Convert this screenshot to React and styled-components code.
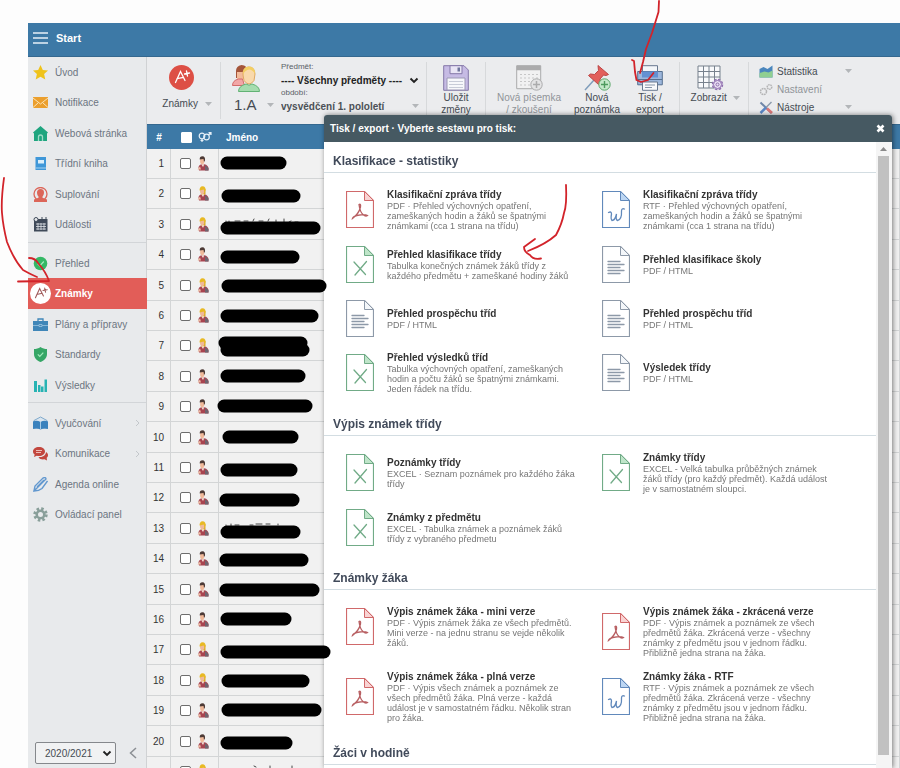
import React from 'react';
import styled, { createGlobalStyle, css } from 'styled-components';

const GlobalStyle = createGlobalStyle`
    * {
        box-sizing: border-box;
    }

    body {
        margin: 0;
        background: #fdfdfd;
        font-family: "Liberation Sans", Arial, sans-serif;
        font-size: 10px;
        color: #454b52;
    }

    button, select, input {
        font: inherit;
        color: inherit;
        margin: 0;
    }
`;

const Page = styled.div`
    height: 100vh;
    padding: 23px 0 0 28px;
    display: flex;
    flex-direction: column;
    overflow: hidden;
`;

const TopBar = styled.header`
    height: 34px;
    flex-shrink: 0;
    padding: 0 5px 4px;
    display: flex;
    align-items: center;
    background: #3d79a6;
    border-bottom: 1px solid #35688f;
`;

const MenuButton = styled.button`
    display: flex;
    align-items: center;
    gap: 8px;
    padding: 0;
    border: none;
    background: none;
    color: white;
    font-size: 11px;
    font-weight: bold;
    cursor: pointer;
`;

const Body = styled.div`
    flex: 1;
    min-height: 0;
    display: flex;
`;

const Sidebar = styled.nav`
    width: 119px;
    flex-shrink: 0;
    display: flex;
    flex-direction: column;
    background: #e8eaec;
    border-right: 1px solid #d0d2d4;
`;

const NavGroup = styled.ul`
    list-style: none;
    margin: 0;
    padding: 0 0 2px;

    & + & {
        border-top: 1px solid #d2d5d8;
        padding-top: 5px;
    }
`;

const NavItem = styled.li`
    height: 30px;

    &:nth-child(even) {
        height: 31px;
    }
`;

const NavLink = styled.a`
    height: 100%;
    padding: 0 6px 0 2px;
    display: flex;
    align-items: center;
    gap: 4px;
    color: #6c7581;
    text-decoration: none;

    ${({ $active }) => $active && css`
        margin-right: -1px;
        background: #e25d58;
        color: white;
        font-weight: bold;
    `}
`;

const NavIcon = styled.span`
    width: 21px;
    display: flex;
    justify-content: center;
`;

const NavArrow = styled.svg`
    margin-left: auto;
`;

const SidebarFooter = styled.div`
    margin-top: auto;
    padding: 0 9px 4px 7px;
    display: flex;
    align-items: center;
    justify-content: space-between;
`;

const CollapseButton = styled.button`
    padding: 0;
    border: none;
    background: none;
    display: flex;
    cursor: pointer;
`;

const SelectBox = styled.span`
    display: grid;
    align-items: center;

    select, svg {
        grid-area: 1 / 1;
    }

    svg {
        justify-self: end;
        margin-right: ${({ $boxed }) => ($boxed ? '4px' : '0')};
        pointer-events: none;
    }
`;

const YearSelect = styled.select`
    width: 81px;
    height: 22px;
    padding: 0 9px;
    appearance: none;
    border: 1px solid #85888c;
    border-radius: 2px;
    background: #f1f2f3;
`;

const Main = styled.main`
    flex: 1;
    min-width: 0;
    background: #f1f1f1;
`;

const Toolbar = styled.div`
    height: 67px;
    padding: 5px 0;
    display: flex;
    background: #ebecee;
`;

const ToolGroup = styled.div`
    width: ${({ $width }) => $width}px;
    flex-shrink: 0;
    display: flex;
    border-right: 1px solid #d7d9db;
`;

const Tool = styled.button`
    width: ${({ $width }) => $width}px;
    padding: 3px 0 0;
    border: none;
    background: none;
    display: flex;
    flex-direction: column;
    align-items: center;
    line-height: 12px;
    cursor: pointer;
    opacity: ${({ disabled }) => (disabled ? 0.55 : 1)};
    gap: ${({ $gap }) => $gap || 1}px;
`;

const ClassTool = styled(Tool)`
    padding-left: 11px;
    align-items: flex-start;
`;

const ToolLabel = styled.span`
    padding-left: ${({ $menu }) => ($menu ? '11px' : '0')};
    display: flex;
    align-items: center;
    gap: 4px;
    text-align: center;
    white-space: pre;
`;

const ClassLabel = styled(ToolLabel)`
    padding-left: 2px;
    gap: 10px;
    font-size: 15px;
`;

const Filters = styled.div`
    flex: 1;
    padding: 0 7px 0 5px;
    display: flex;
    flex-direction: column;
`;

const FilterLabel = styled.label`
    font-size: 8px;
    line-height: 10px;
    color: #5a6066;
`;

const FilterSelect = styled.select`
    width: 100%;
    height: 16px;
    padding: 0;
    appearance: none;
    border: none;
    background: none;
    font-weight: bold;
    color: ${({ $dark }) => ($dark ? '#222' : '#4b5157')};
`;

const ToolList = styled.div`
    padding: 0 0 0 10px;
    width: 103px;
    display: flex;
    flex-direction: column;
`;

const SmallTool = styled.button`
    height: 18px;
    padding: 0;
    border: none;
    background: none;
    display: flex;
    align-items: center;
    gap: 4px;
    opacity: ${({ disabled }) => (disabled ? 0.55 : 1)};

    svg:last-child:not(:first-child) {
        margin-left: auto;
    }
`;

const Table = styled.table`
    width: 100%;
    table-layout: fixed;
    border-collapse: separate;
    border-spacing: 0;
`;

const HeadCell = styled.th`
    width: ${({ $width }) => ($width ? `${$width}px` : 'auto')};
    height: 25px;
    padding: 0 7px;
    background: #3d79a6;
    border-top: 1px solid #35688f;
    color: white;
    font-weight: bold;
    text-align: ${({ $center }) => ($center ? 'center' : 'left')};
`;

const Row = styled.tr`
    height: 30px;

    &:nth-child(5n), &:nth-child(5n + 3) {
        height: 31px;
    }
`;

const Cell = styled.td`
    padding: 0 6px;
    border-right: 1px solid #d3d5d6;
    border-bottom: 1px solid #d3d5d6;
    text-align: right;
    color: #333;
`;

const CheckCell = styled.div`
    padding-left: 3px;
    display: flex;
    align-items: center;
    gap: 6px;
`;

const Check = styled.input`
    width: 11px;
    height: 11px;
    flex-shrink: 0;
    appearance: none;
    border: 1px solid ${({ $light }) => ($light ? 'white' : '#6d6d6d')};
    border-radius: ${({ $light }) => ($light ? '1px' : '2px')};
    background: white;
`;

const Dialog = styled.section`
    position: fixed;
    top: 115px;
    left: 324px;
    right: 8px;
    bottom: 0;
    display: flex;
    flex-direction: column;
    background: white;
    border-radius: 3px 3px 0 0;
    box-shadow: 1px 0 5px rgba(0, 0, 0, 0.5);
`;

const DialogHeader = styled.header`
    height: 27px;
    flex-shrink: 0;
    padding: 0 7px 0 6px;
    display: flex;
    align-items: center;
    justify-content: space-between;
    background: #465962;
    border-radius: 3px 3px 0 0;
    color: white;
`;

const DialogTitle = styled.h1`
    margin: 0;
    font-size: 10px;
`;

const CloseButton = styled.button`
    padding: 0;
    border: none;
    background: none;
    display: flex;
    cursor: pointer;
`;

const DialogBody = styled.div`
    flex: 1;
    min-height: 0;
    display: flex;
    overflow: hidden;
`;

const Reports = styled.div`
    flex: 1;
`;

const SectionTitle = styled.h2`
    margin: 0;
    padding: ${({ $first }) => ($first ? '11px' : '16px')} 9px 3px;
    border-bottom: 1px solid #d3dde2;
    font-size: 12px;
    line-height: 16px;
    color: #414a5a;
`;

const ReportGrid = styled.div`
    padding: 9px 18px 0 22px;
    display: grid;
    grid-template-columns: 1fr 1fr;
    align-items: start;
`;

const Report = styled.a`
    min-height: 54px;
    padding: 6px 0;
    display: flex;
    align-items: center;
    gap: 13px;
    color: #767676;
    text-decoration: none;

    svg {
        flex-shrink: 0;
    }
`;

const ReportText = styled.div`
    max-width: 192px;
    font-size: 9px;
    line-height: 10px;
`;

const ReportTitle = styled.div`
    font-size: 10px;
    line-height: 13px;
    font-weight: bold;
    color: #333;
    white-space: nowrap;
`;

const ScrollTrack = styled.div`
    width: 16px;
    flex-shrink: 0;
    padding: 5px 3px 13px 2px;
    display: flex;
    flex-direction: column;
    align-items: center;
    gap: 5px;
    background: #f5f5f5;
`;

const ScrollThumb = styled.div`
    width: 11px;
    flex: 1;
    background: #c1c1c1;
`;

const Markup = styled.svg`
    position: absolute;
    top: 0;
    left: 0;
    z-index: 3;
    pointer-events: none;
`;

const Caret = () => (
  <svg width="7" height="4" viewBox="0 0 7 4"><path d="M0 0h7L3.500 4z" fill="#b3b6b9" /></svg>
);

const Chevron = () => (
  <svg width="10" height="7" viewBox="0 0 10 7"><path d="M1.500 1.500 5 5l3.500-3.500" fill="none" stroke="#222" strokeWidth="1.900" /></svg>
);

const Grade = ({ size, bg, fg }) => (
  <svg width={size} height={size} viewBox="0 0 25 25">
    <circle cx="12.500" cy="12.500" r="12.500" fill={bg} />
    <path d="M6.500 17.500 11.500 6.500l4.500 9M8 13.700l6.500-1.400M15.500 9l5-1M17.500 6l1 5" fill="none" stroke={fg} strokeWidth="1.300" strokeLinecap="round" />
  </svg>
);

const navIcons = {
  star: <path d="m7.500 0 2.300 5 5.200.5-3.900 3.600 1.200 5.400-4.800-2.800-4.800 2.800 1.200-5.400L0 5.500 5.200 5z" fill="#efc31b" />,
  mail: <><path d="M0 2h15v11H0z" fill="#eb9f2d" /><path d="m0 3 7.500 6L15 3M0 12.500 5 8m10 4.500L10 8" fill="none" stroke="#fbe3b5" /></>,
  home: <><path d="M7.500 0 15 6.500l-1 1V15H1V7.500l-1-1z" fill="#1fa57f" /><path d="M5.500 15v-4q0-2 2-2t2 2v4" fill="none" stroke="#9fdcc7" strokeWidth="1.300" /></>,
  book: <><path d="M2.500 1h10.500v13H2.500z" fill="#3f97d8" /><path d="M5 4h6v3.500H5z" fill="#d9eefb" /><path d="M2.500 12h10.500" stroke="#a5d2f1" /></>,
  user: <><circle cx="7.500" cy="7" r="6.500" fill="none" stroke="#dc6659" strokeWidth="1.300" /><path d="M7.500 2c2.500 0 3.500 1.500 3.500 3.500S10 9 9.500 9.500v1.200L14 12.500V15H1v-2.500l4.500-1.800V9.500C4.500 8.500 4 7 4 5.500S5 2 7.500 2z" fill="#dc6659" /></>,
  calendar: <><path d="M1 2h13.500v12.500H1z" fill="#3f4a59" /><circle cx="3" cy="2.500" r="2" fill="#e8eaec" stroke="#3f4a59" /><path d="M9 0v3.500M13 0v3.500" stroke="#3f4a59" /><path d="M3 7h10M3 9.500h10M3 12h10M5 6v7M8 6v7M11 6v7" stroke="#dfe3e8" strokeWidth=".8" /></>,
  check: <><circle cx="7.500" cy="7.500" r="6.800" fill="#34b865" /><path d="m4.500 7.500 2.300 2.300 4-4.300" fill="none" stroke="#a4ecbd" strokeWidth="1.200" /></>,
  case: <><path d="M0 4h15v10H0z" fill="#3f86b8" /><path d="M5 4V2h5v2" fill="none" stroke="#3f86b8" strokeWidth="1.300" /><path d="M0 8.500h6M9 8.500h6M6 7.500h3v2H6z" stroke="#9cc4de" fill="none" strokeWidth=".8" /></>,
  shield: <><path d="M7.500 0c2 1.600 4.300 2 6.500 2v5c0 4-3 6.800-6.500 8C4 13.800 1 11 1 7V2c2.200 0 4.500-.4 6.500-2z" fill="#35a666" /><path d="m4.800 7.300 2 2 3.500-3.700" fill="none" stroke="#a4ecbd" strokeWidth="1.200" /></>,
  chart: <path d="M1 3h3v11H1zM5 7h2.500v7H5zM8 8.500h2.500V14H8zM11.500 1.500H14V14h-2.500z" fill="#27b3b3" />,
  teach: <><path d="M7.500 1 14 4.500V12H1V4.500z" fill="#dbe6ef" stroke="#7fa9cc" /><path d="M0 5.500q4-1.500 7.500.5 3.500-2 7.500-.5V13q-4-1-7.500.5Q4 12 0 13z" fill="#3b82bd" /><path d="M7.500 6v7" stroke="#a7cbe6" /></>,
  chat: <><path d="M6 1c3.500 0 6 1.900 6 4.500S9.500 10 6 10c-.8 0-1.500-.1-2.200-.3L1 11l.7-2.500C.6 7.800 0 6.700 0 5.500 0 2.900 2.500 1 6 1z" fill="#c2473e" /><path d="M13 6c1.500.8 2 1.900 2 3.200 0 1-.5 1.900-1.300 2.600L14 14.500l-2.500-1.200C9 13.800 6.500 13 5.500 11.200 9.500 11.200 12.800 9.500 13 6z" fill="#c2473e" /><path d="M3 4.500h6M3 6.500h5" stroke="#f3c9c5" strokeWidth=".9" /></>,
  pen: <path d="m1 14 1-5 8-8q3-1 3 1l-8.500 8.500L1 14q5 0 8-2.500L14.500 4M4 10l7-7" fill="none" stroke="#6298cf" strokeWidth="1.400" />,
  gear: <><circle cx="7.500" cy="7.500" r="5.700" fill="none" stroke="#899f9a" strokeWidth="3" strokeDasharray="2.400 2.076" /><circle cx="7.500" cy="7.500" r="3.800" fill="none" stroke="#899f9a" strokeWidth="2.600" /></>,
};

const menu = [
  [['star', 'Úvod'], ['mail', 'Notifikace'], ['home', 'Webová stránka'], ['book', 'Třídní kniha'], ['user', 'Suplování'], ['calendar', 'Události']],
  [['check', 'Přehled'], ['grade', 'Známky'], ['case', 'Plány a přípravy'], ['shield', 'Standardy'], ['chart', 'Výsledky']],
  [['teach', 'Vyučování', true], ['chat', 'Komunikace', true], ['pen', 'Agenda online'], ['gear', 'Ovládací panel']],
];

// m = boy, f = girl
const pupils = 'mffmfffmmmmmfmmmffmmf'.split('');
const numbered = 20;

const Person = ({ type }) => {
  const girl = type === 'f';
  return (
    <svg width="12" height="15" viewBox="0 0 12 15">
      <path d="M1.500 11.500q0-2.500 3-3.300h3q3.500 1 4 3.800v2.500H2z" fill="#a84450" />
      <path d="m8 9 3.500 3v2.500H8z" fill="#6e6570" />
      {girl && <path d="M3 3h5.500v4.500L7.500 9H4.500z" fill="#dcae2a" />}
      <path d="M4.300 8.300 6 11l1.300-2.700z" fill="#f6e6da" />
      <ellipse cx="5.200" cy="5" rx="2.100" ry="3.200" fill="#f0b99a" />
      {girl
        ? <path d="M2.500 4.500Q2.500.5 5.500.3 9 .5 8.500 4.500L7.500 6 6.800 3.500z" fill="#e8b923" />
        : <path d="M2.700 3.500Q2.500.3 5.500.3 8.500.5 8 4.500L7 6 6.500 3z" fill="#4d3a36" />}
      <path d="M.5 13.500 3 10.500l1 3z" fill="#eec0a5" />
    </svg>
  );
};

const fileColors = {
  pdf: ['#d0696a', '#f9d3d3'],
  xls: ['#71ab87', '#bfe5c9'],
  rtf: ['#6189bb', '#bcd6f3'],
  doc: ['#8d99a8', '#f4f7fa'],
};

const fileMarks = {
  pdf: <path d="M13 13.500q2-1 1.500 2.500Q13 22.500 6.500 27.500q.5-2.500 7-3.500 5.500-1 8 .5-2 1.500-4.500-1-3-2.500-4-10z" stroke="#b85f62" />,
  xls: <path d="m8 16 11.500 12.500M20.500 15.500 9 29" />,
  rtf: <path d="M6.500 21.500q3-1.500 3 1.500-1 5 .5 6.500 3 0 4.500-6.500-1 6 1 6.500 4.500-1 4-9.500 0-3 3-2" />,
  doc: <path d="M6 15.500h12M6 18.500h16M6 21.500h12M6 24.500h16M6 27.500h12" />,
};

const FileIcon = ({ type }) => (
  <svg width="28" height="37" viewBox="0 0 28 37" fill="none" stroke={fileColors[type][0]}>
    <path d="M.5.5h18l9 9v27H.5z" strokeWidth="1.200" />
    <path d="M18.500.5v9h9z" fill={fileColors[type][1]} />
    <g strokeWidth="1.300" strokeLinecap="round">{fileMarks[type]}</g>
  </svg>
);

const sections = [
  {
    title: 'Klasifikace - statistiky',
    items: [
      ['pdf', 'Klasifikační zpráva třídy', 'PDF · Přehled výchovných opatření, zameškaných hodin a žáků se špatnými známkami (cca 1 strana na třídu)'],
      ['rtf', 'Klasifikační zpráva třídy', 'RTF · Přehled výchovných opatření, zameškaných hodin a žáků se špatnými známkami (cca 1 strana na třídu)'],
      ['xls', 'Přehled klasifikace třídy', 'Tabulka konečných známek žáků třídy z každého předmětu + zameškané hodiny žáků'],
      ['doc', 'Přehled klasifikace školy', 'PDF / HTML'],
      ['doc', 'Přehled prospěchu tříd', 'PDF / HTML'],
      ['doc', 'Přehled prospěchu tříd', 'PDF / HTML'],
      ['xls', 'Přehled výsledků tříd', 'Tabulka výchovných opatření, zameškaných hodin a počtu žáků se špatnými známkami. Jeden řádek na třídu.'],
      ['doc', 'Výsledek třídy', 'PDF / HTML'],
    ],
  },
  {
    title: 'Výpis známek třídy',
    items: [
      ['xls', 'Poznámky třídy', 'EXCEL · Seznam poznámek pro každého žáka třídy'],
      ['xls', 'Známky třídy', 'EXCEL - Velká tabulka průběžných známek žáků třídy (pro každý předmět). Každá událost je v samostatném sloupci.'],
      ['xls', 'Známky z předmětu', 'EXCEL · Tabulka známek a poznámek žáků třídy z vybraného předmetu'],
    ],
  },
  {
    title: 'Známky žáka',
    items: [
      ['pdf', 'Výpis známek žáka - mini verze', 'PDF · Výpis známek žáka ze všech předmětů. Mini verze - na jednu stranu se vejde několik žáků.'],
      ['pdf', 'Výpis známek žáka - zkrácená verze', 'PDF · Výpis známek a poznámek ze všech předmětů žáka. Zkrácená verze - všechny známky z předmětu jsou v jednom řádku. Přibližně jedna strana na žáka.'],
      ['pdf', 'Výpis známek žáka - plná verze', 'PDF · Výpis všech známek a poznámek ze všech předmětů žáka. Plná verze - každá událost je v samostatném řádku. Několik stran pro žáka.'],
      ['rtf', 'Známky žáka - RTF', 'RTF · Výpis známek a poznámek ze všech předmětů žáka. Zkrácená verze - všechny známky z předmětu jsou v jednom řádku. Přibližně jedna strana na žáka.'],
    ],
  },
  { title: 'Žáci v hodině', items: [] },
];

// blacked out names: x start, x end, y
const strokes = [
  [221, 286, 163], [222, 300, 196], [221, 320, 228], [221, 299, 257], [222, 326, 286],
  [221, 318, 316], [219, 307, 343], [221, 309, 350], [221, 305, 376], [218, 312, 406],
  [223, 298, 437], [221, 297, 470], [220, 299, 500], [221, 300, 532], [220, 308, 560],
  [220, 319, 590], [221, 291, 619], [221, 330, 652], [222, 309, 681], [222, 321, 710],
  [221, 292, 743],
];

const PeopleIcon = () => (
  <svg width="28" height="27" viewBox="0 0 28 27">
    <path d="M4 6q0-5 5.500-6 6 0 6 7v6H4z" fill="#a4553a" />
    <path d="M5 7h8v7H5z" fill="#f3bb9a" />
    <path d="M.5 20.500q0-5 6-6.500h4l2 6.500z" fill="#f2a7a7" stroke="#d46a6a" />
    <path d="M11 10q-.5-7.500 5.500-8T23 9l-1 6.500q-2.500 3.500-5 3.500t-5-3.500z" fill="#f9d9ac" stroke="#e0a860" />
    <path d="M11 10q-1-8 5.500-8.500Q23.500 1.500 23 9q-2-4-5.500-4.500Q12.500 5 11 10z" fill="#f3cf63" />
    <path d="M6.500 26.500q0-5.500 7.500-7.500 3 2.500 6 0 7.500 2 7.500 7.500z" fill="#a5dcae" stroke="#62b274" />
  </svg>
);

const SaveIcon = () => (
  <svg width="26" height="26" viewBox="0 0 26 26">
    <path d="M.7.700H21l4.300 4.300v20.300H.7z" fill="#c6bbe4" stroke="#8478a8" />
    <path d="M7 .7h12v8H7z" fill="#e9e5f5" stroke="#8478a8" />
    <path d="M14.500 2.500h2.500v4h-2.500z" fill="#6f759b" />
    <path d="M4 13h18v12H4z" fill="#f7f8fb" stroke="#9c98b5" />
    <path d="M6 16.500h14M6 19.500h14M6 22.500h14" stroke="#c8ccd8" />
  </svg>
);

const TestIcon = () => (
  <svg width="27" height="26" viewBox="0 0 27 26">
    <path d="M.7.700h24v23h-24z" fill="#f6f6f6" stroke="#777" />
    <path d="M.7.700h24v4.500h-24z" fill="#777" />
    <path d="M4 9.500h18M4 13h18M4 16.500h13M4 20h10" stroke="#aaa" strokeDasharray="2 2" />
    <circle cx="20.500" cy="19.500" r="5.700" fill="#ddd" stroke="#777" />
    <path d="M20.500 16v7M17 19.500h7" stroke="#777" strokeWidth="1.500" />
  </svg>
);

const PinIcon = () => (
  <svg width="27" height="26" viewBox="0 0 27 26">
    <path d="m1 25 9-10" stroke="#7f9dbb" strokeWidth="1.500" />
    <path d="m14 .5 10.500 9-2.500 1-2.500-.5-3.500 4 .5 4-2 1.500L4.500 10.500 6.500 9l4 .5 4-4z" fill="#e2605c" stroke="#bd4746" />
    <circle cx="20.500" cy="19.500" r="5.700" fill="#c5e8c9" stroke="#5fa86d" />
    <path d="M20.500 16v7M17 19.500h7" stroke="#4e9a5d" strokeWidth="1.400" />
  </svg>
);

const PrintIcon = () => (
  <svg width="26" height="26" viewBox="0 0 26 26">
    <path d="M5.500.7h15v6h-15z" fill="#f4f6f9" stroke="#68788f" />
    <path d="M.7 6.500h24.600v13.300H.7z" fill="#9db7dc" stroke="#56708f" />
    <path d="M5 6.500h16v6H5z" fill="#6391d2" />
    <path d="M1 14.500h24" stroke="#56708f" />
    <path d="M5.500 17h15v8.300h-15z" fill="#f8f9fb" stroke="#68788f" />
    <path d="M8 20h10M8 22.500h7" stroke="#8795a8" />
  </svg>
);

const ViewIcon = () => (
  <svg width="27" height="26" viewBox="0 0 27 26" fill="none">
    <path d="M1 1h22v22H1zM1 6.500h22M1 12h22M1 17.500h22M6.500 1v22M12 1v22M17.500 1v22" fill="#f8f9fb" stroke="#77818d" />
    <circle cx="20.500" cy="19.500" r="5" fill="#eadff3" stroke="#8e6fae" strokeWidth="1.500" strokeDasharray="2.500 1.400" />
    <circle cx="20.500" cy="19.500" r="4" fill="#eadff3" stroke="#8e6fae" />
    <circle cx="20.500" cy="19.500" r="1.500" stroke="#8e6fae" />
  </svg>
);

const App = () => {
  return (
    <Page>
      <GlobalStyle />
      <TopBar>
        <MenuButton>
          <svg width="15" height="12" viewBox="0 0 15 12"><path d="M0 1h15M0 6h15M0 11h15" stroke="#e6f0f8" strokeWidth="1.500" /></svg>
          Start
        </MenuButton>
      </TopBar>
      <Body>
        <Sidebar>
          {menu.map((group, i) => (
            <NavGroup key={i}>
              {group.map(([icon, label, more]) => (
                <NavItem key={label}>
                  <NavLink href="#" $active={icon === 'grade'}>
                    <NavIcon>
                      {icon === 'grade'
                        ? <Grade size={21} bg="white" fg="#a05a5a" />
                        : <svg width="15" height="15" viewBox="0 0 15 15">{navIcons[icon]}</svg>}
                    </NavIcon>
                    {label}
                    {more && <NavArrow width="5" height="8" viewBox="0 0 5 8"><path d="m1 1 3 3-3 3" fill="none" stroke="#c3c7cb" /></NavArrow>}
                  </NavLink>
                </NavItem>
              ))}
            </NavGroup>
          ))}
          <SidebarFooter>
            <SelectBox $boxed>
              <YearSelect aria-label="Školní rok" defaultValue="2020/2021">
                <option>2020/2021</option>
              </YearSelect>
              <Chevron />
            </SelectBox>
            <CollapseButton aria-label="Sbalit menu">
              <svg width="8" height="12" viewBox="0 0 8 12"><path d="M7 1 1.500 6 7 11" fill="none" stroke="#8b8f94" strokeWidth="1.500" /></svg>
            </CollapseButton>
          </SidebarFooter>
        </Sidebar>
        <Main>
          <Toolbar>
            <ToolGroup $width={74}>
              <Tool $width={69} $gap={8}>
                <Grade size={25} bg="#dd4f45" fg="white" />
                <ToolLabel $menu>Známky <Caret /></ToolLabel>
              </Tool>
            </ToolGroup>
            <ToolGroup $width={206}>
              <ClassTool $width={55} $gap={7}>
                <PeopleIcon />
                <ClassLabel>1.A<Caret /></ClassLabel>
              </ClassTool>
              <Filters>
                <FilterLabel htmlFor="subject">Předmět:</FilterLabel>
                <SelectBox>
                  <FilterSelect id="subject" $dark>
                    <option>---- Všechny předměty ----</option>
                  </FilterSelect>
                  <Chevron />
                </SelectBox>
                <FilterLabel htmlFor="period">období:</FilterLabel>
                <SelectBox>
                  <FilterSelect id="period">
                    <option>vysvědčení 1. pololetí</option>
                  </FilterSelect>
                  <Caret />
                </SelectBox>
              </Filters>
            </ToolGroup>
            <ToolGroup $width={59}>
              <Tool $width={58}>
                <SaveIcon />
                <ToolLabel>{'Uložit\nzměny'}</ToolLabel>
              </Tool>
            </ToolGroup>
            <ToolGroup $width={194}>
              <Tool $width={86} disabled>
                <TestIcon />
                <ToolLabel>{'Nová písemka\n/ zkoušení'}</ToolLabel>
              </Tool>
              <Tool $width={50}>
                <PinIcon />
                <ToolLabel>{'Nová\npoznámka'}</ToolLabel>
              </Tool>
              <Tool $width={56}>
                <PrintIcon />
                <ToolLabel>{'Tisk /\nexport'}</ToolLabel>
              </Tool>
            </ToolGroup>
            <ToolGroup $width={69}>
              <Tool $width={60}>
                <ViewIcon />
                <ToolLabel $menu>Zobrazit <Caret /></ToolLabel>
              </Tool>
            </ToolGroup>
            <ToolList>
              <SmallTool>
                <svg width="14" height="13" viewBox="0 0 14 13"><path d="M.5 12.500V4l4-2 4 2 5-3.500v12z" fill="#4a86bd" /><path d="M.5 12.500V8l5-1.500 4 1 4-2v7z" fill="#8fcf91" /></svg>
                Statistika
                <Caret />
              </SmallTool>
              <SmallTool disabled>
                <svg width="14" height="13" viewBox="0 0 14 13" fill="none" stroke="#888" strokeWidth="1.500"><circle cx="4.500" cy="8.500" r="3" strokeDasharray="1.800 .6" /><circle cx="10.500" cy="4" r="2.300" strokeDasharray="1.500 .6" /></svg>
                <span>Nastavení</span>
              </SmallTool>
              <SmallTool>
                <svg width="14" height="13" viewBox="0 0 14 13"><path d="m1.500 1.500 11 10.500" stroke="#7087a8" strokeWidth="2" /><path d="M12.500 1 7 6.500" stroke="#8b99ab" strokeWidth="1.500" /><path d="M7 6.500 1.500 12" stroke="#5a86c5" strokeWidth="2.500" /><path d="m8 7.500 5 4.500" stroke="#dc7878" strokeWidth="2.800" /></svg>
                Nástroje
                <Caret />
              </SmallTool>
            </ToolList>
          </Toolbar>
          <Table>
            <thead>
              <tr>
                <HeadCell $width={24} $center>#</HeadCell>
                <HeadCell $width={48}>
                  <CheckCell>
                    <Check type="checkbox" aria-label="Vybrat vše" $light />
                    <svg width="14" height="10" viewBox="0 0 14 10" fill="none" stroke="#e6f0f8" strokeWidth="1.200"><circle cx="4" cy="4" r="2.800" /><circle cx="8.500" cy="5" r="2.800" /><path d="M4 7v3M2.500 8.500h3M10.500 3 13 .7M10.500.6H13V3" /></svg>
                  </CheckCell>
                </HeadCell>
                <HeadCell>Jméno</HeadCell>
              </tr>
            </thead>
            <tbody>
              {pupils.map((type, i) => (
                <Row key={i}>
                  <Cell>{i < numbered && i + 1}</Cell>
                  <Cell>
                    <CheckCell>
                      <Check type="checkbox" aria-label={`Vybrat žáka ${i + 1}`} />
                      <Person type={type} />
                    </CheckCell>
                  </Cell>
                  <Cell />
                </Row>
              ))}
            </tbody>
          </Table>
        </Main>
      </Body>
      <Dialog role="dialog" aria-labelledby="dialog-title">
        <DialogHeader>
          <DialogTitle id="dialog-title">Tisk / export · Vyberte sestavu pro tisk:</DialogTitle>
          <CloseButton aria-label="Zavřít">
            <svg width="9" height="9" viewBox="0 0 9 9"><path d="m1.500 1.500 6 6m0-6-6 6" stroke="white" strokeWidth="2.600" /></svg>
          </CloseButton>
        </DialogHeader>
        <DialogBody>
          <Reports>
            {sections.map((section, i) => (
              <div key={section.title}>
                <SectionTitle $first={i === 0}>{section.title}</SectionTitle>
                <ReportGrid>
                  {section.items.map(([type, title, text], j) => (
                    <Report href="#" key={j}>
                      <FileIcon type={type} />
                      <ReportText>
                        <ReportTitle>{title}</ReportTitle>
                        {text}
                      </ReportText>
                    </Report>
                  ))}
                </ReportGrid>
              </div>
            ))}
          </Reports>
          <ScrollTrack aria-hidden="true">
            <svg width="7" height="4" viewBox="0 0 7 4"><path d="M0 4h7L3.500 0z" fill="#8a8a8a" /></svg>
            <ScrollThumb />
          </ScrollTrack>
        </DialogBody>
      </Dialog>
      <Markup width="900" height="768" viewBox="0 0 900 768" fill="none" strokeLinecap="round" strokeLinejoin="round">
        <path d="M226 221v1m3-1v1m6-1h5m4 0h4m5 0 1-2m5 2h4m5 0 1-2m7 3v-2m8 2v-3m5 3 2-1m4 1h3M226 525v1m5-2v2m4-1h4m11 0h3m3-1h6m4 0h4m8 0v1M254 766l2 1m14 1v-2m22 2v-2" stroke="#444" />
        <g stroke="black" strokeWidth="13">
          {strokes.map(([x1, x2, y]) => (
            <path key={y} d={`M${x1 + 6} ${y}H${x2 - 6}`} />
          ))}
        </g>
        <g stroke="#d2232a" strokeWidth="1.800">
          <path d="M659 1 658.500 12 652 33 646 49 643 62 640 73" />
          <path d="M632 60 634 61 635 72 636.500 80 641 82 648 80 653.500 73" />
          <path d="M4 178Q1 200 2 213T7 242Q14 260 23 270 32 275 37 277" />
          <path d="M29 258q6 0 9 5 8 9 11 18l-31 .5" />
          <path d="M566 185Q567 205 564 213 562 224 556 235 546 244 528 251" />
          <path d="M535 239 524 247q0 5 6 8 3 5 11 3.500" />
        </g>
      </Markup>
    </Page>
  );
};

export default App;
